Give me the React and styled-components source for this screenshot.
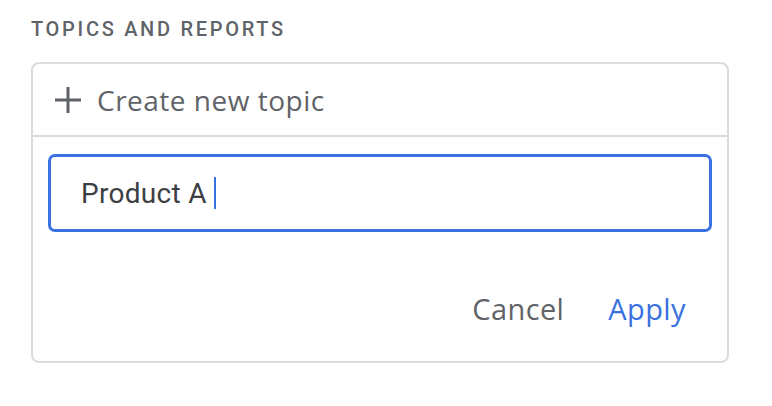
import React from "react";
import styled, { createGlobalStyle } from "styled-components";

const Global = createGlobalStyle`
  html, body { margin: 0; padding: 0; background: #fff; }
  body { font-family: Roboto, "Noto Sans", sans-serif; }
`;

const Page = styled.div`
  width: 772px;
  height: 406px;
  padding: 14px 0 0 31px;
  box-sizing: border-box;
`;

const Title = styled.div`
  font-size: 20px;
  font-weight: 500;
  line-height: 30px;
  letter-spacing: 2.7px;
  color: #5f6368;
`;

const Card = styled.div`
  margin-top: 18px;
  width: 698px;
  height: 301px;
  box-sizing: border-box;
  border: 2px solid #dadce0;
  border-radius: 8px;
  display: flex;
  flex-direction: column;
`;

const Header = styled.div`
  height: 71px;
  display: flex;
  align-items: center;
  gap: 16px;
  padding-left: 22px;
  border-bottom: 2px solid #dadce0;
  color: #5f6368;
  font-family: "Open Sans", Roboto, sans-serif;
  font-size: 28px;
  letter-spacing: 0.5px;
  cursor: pointer;
`;

const Body = styled.div`
  flex: 1;
  display: flex;
  flex-direction: column;
  padding: 17px 15px 0 15px;
`;

const Input = styled.div`
  height: 78px;
  box-sizing: border-box;
  border: 3px solid #3a71e0;
  border-radius: 7px;
  display: flex;
  align-items: center;
  padding-left: 30px;
  font-size: 28px;
  letter-spacing: 0.3px;
  color: #3c4043;
`;

const Caret = styled.span`
  display: inline-block;
  width: 2px;
  height: 32px;
  background: #3a71e0;
  margin-left: 7px;
`;

const Actions = styled.div`
  display: flex;
  justify-content: flex-end;
  align-items: center;
  gap: 44px;
  padding-right: 26px;
  margin-top: 57px;
  height: 38px;
`;

const ActionButton = styled.button`
  border: none;
  background: none;
  padding: 0;
  font-family: "Open Sans", Roboto, sans-serif;
  font-size: 29px;
  letter-spacing: 0.4px;
  color: ${(p) => (p.$primary ? "#3a71e0" : "#5f6368")};
  cursor: pointer;
`;

const PlusIcon = () => (
  <svg width="26" height="26" viewBox="0 0 26 26">
    <path d="M13 0v26M0 13h26" stroke="#5f6368" strokeWidth="3" fill="none" />
  </svg>
);

export default function App() {
  return (
    <>
      <Global />
      <Page>
        <Title>TOPICS AND REPORTS</Title>
        <Card>
          <Header>
            <PlusIcon />
            <span>Create new topic</span>
          </Header>
          <Body>
            <Input>
              Product A
              <Caret />
            </Input>
            <Actions>
              <ActionButton>Cancel</ActionButton>
              <ActionButton $primary>Apply</ActionButton>
            </Actions>
          </Body>
        </Card>
      </Page>
    </>
  );
}
